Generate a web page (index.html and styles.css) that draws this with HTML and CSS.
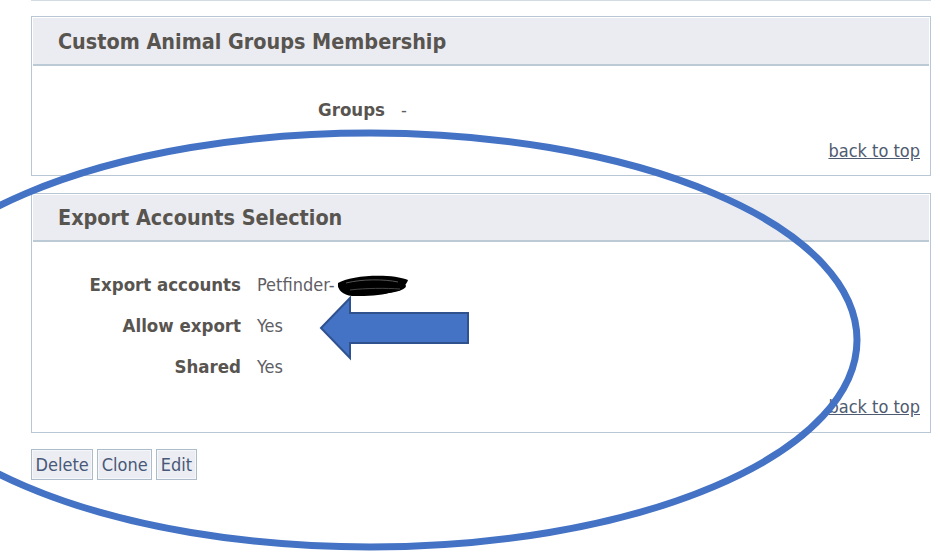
FILE: index.html
```html
<!DOCTYPE html>
<html>
<head>
<meta charset="utf-8">
<link rel="stylesheet" href="styles.css">
</head>
<body>
<div class="page">
  <div class="topline"></div>

  <div class="panel panel-groups">
    <div class="panel-head">Custom Animal Groups Membership</div>
    <div class="panel-body">
      <div class="row">
        <div class="label">Groups</div>
        <div class="value">-</div>
      </div>
      <div class="backtop"><a href="#">back to top</a></div>
    </div>
  </div>

  <div class="panel panel-export">
    <div class="panel-head">Export Accounts Selection</div>
    <div class="panel-body">
      <div class="row">
        <div class="label">Export accounts</div>
        <div class="value">Petfinder-<span class="redact"></span></div>
      </div>
      <div class="row">
        <div class="label">Allow export</div>
        <div class="value">Yes</div>
      </div>
      <div class="row">
        <div class="label">Shared</div>
        <div class="value">Yes</div>
      </div>
      <div class="backtop"><a href="#">back to top</a></div>
    </div>
  </div>

  <div class="actions">
    <button class="btn">Delete</button>
    <button class="btn">Clone</button>
    <button class="btn">Edit</button>
  </div>
</div>

<svg class="annot" width="940" height="559" viewBox="0 0 940 559" xmlns="http://www.w3.org/2000/svg">
  <g fill="#000">
    <ellipse cx="372" cy="286" rx="34" ry="8"/>
    <path d="M338 283 C350 275 392 273 408 280 C405 291 384 297 352 296 C343 295 337 290 338 283 Z"/>
  </g>
  <path d="M346 283 C362 279 384 279 398 282" stroke="#555" stroke-width="1" fill="none"/>
  <path d="M350 290 C366 288 386 288 400 289" stroke="#444" stroke-width="1" fill="none"/>
  <ellipse cx="370" cy="340" rx="487" ry="207" fill="none" stroke="#4472c4" stroke-width="7"/>
  <polygon points="321,328 350,298 350,313 468,313 468,343 350,343 350,358" fill="#4472c4" stroke="#2f528f" stroke-width="2" stroke-linejoin="miter"/>
</svg>
</body>
</html>
```

FILE: styles.css
```css
html, body {
  margin: 0;
  padding: 0;
  background: #ffffff;
}

body {
  width: 940px;
  height: 559px;
  overflow: hidden;
  position: relative;
  font-family: "DejaVu Sans Condensed", "DejaVu Sans", sans-serif;
  font-size: 18px;
  color: #5a5a5a;
}

.page {
  padding-left: 31px;
  width: 900px;
}

.topline {
  height: 0;
  border-top: 1px solid #d3dbe3;
  margin-bottom: 15px;
}

.panel {
  border: 1px solid #b9c6d3;
  background: #fff;
}

.panel-head {
  height: 46px;
  margin: 1px 1px 0 1px;
  background: #ebecf1;
  border-bottom: 2px solid #bccad6;
  display: flex;
  align-items: center;
  padding-left: 25px;
  font-weight: bold;
  font-size: 21.4px;
  color: #585450;
}

.panel-body {
  padding: 0 10px 14px 0;
}

.panel-groups .panel-body {
  padding-top: 34px;
}

.panel-groups .row {
  height: 20px;
  line-height: 20px;
}

.panel-groups .label {
  width: 353px;
}

.panel-groups .backtop {
  margin-top: 21px;
}

.panel-export {
  margin-top: 17px;
}

.panel-export .panel-head {
  height: 45px;
}

.panel-export .panel-body {
  padding-top: 22px;
  padding-bottom: 15px;
}

.panel-export .row {
  height: 41px;
  line-height: 41px;
}

.panel-export .label {
  width: 209px;
}

.panel-export .backtop {
  margin-top: 10px;
}

.row {
  display: flex;
  gap: 16px;
}

.label {
  text-align: right;
  font-weight: bold;
  font-size: 18.5px;
  color: #585450;
  flex: none;
}

.value {
  color: #5e5e64;
  white-space: nowrap;
}

.redact {
  display: inline-block;
  width: 68px;
}

.backtop {
  text-align: right;
  line-height: 20px;
  height: 20px;
}

.backtop a {
  color: #4f5b70;
  text-decoration: underline;
}

.actions {
  margin-top: 16px;
  display: flex;
  gap: 4px;
}

.btn {
  height: 31px;
  padding: 0 3.5px;
  font-family: "DejaVu Sans Condensed", "DejaVu Sans", sans-serif;
  font-size: 18px;
  color: #485878;
  background: #ebedf2;
  border: 1px solid #aebbc9;
  box-shadow: inset 0 0 0 1px #f6f7fa;
  border-radius: 0;
}

.annot {
  position: absolute;
  left: 0;
  top: 0;
  pointer-events: none;
}
```
